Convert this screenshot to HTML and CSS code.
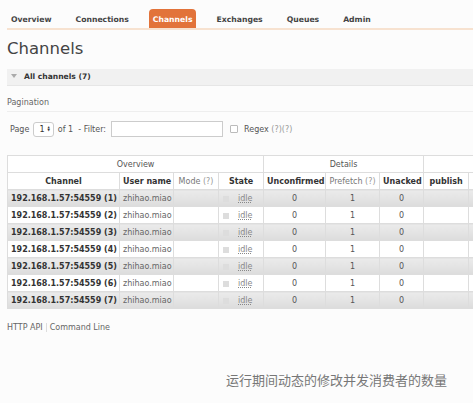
FILE: index.html
```html
<!DOCTYPE html>
<html lang="en">

<head>
  <meta charset="UTF-8">
  <title>Channels</title>
  <link rel="stylesheet" href="styles.css">
</head>

<body>

  <!-- Top navigation -->
  <ul class="tabs">
    <li><a href="#">Overview</a></li>
    <li><a href="#">Connections</a></li>
    <li><a href="#" class="selected">Channels</a></li>
    <li><a href="#">Exchanges</a></li>
    <li><a href="#">Queues</a></li>
    <li><a href="#">Admin</a></li>
  </ul>

  <h1>Channels</h1>

  <div class="section-bar"><span class="arrow"></span>All channels (7)</div>

  <div class="pagination-label">Pagination</div>

  <!-- Filter row -->
  <div class="filter-row">
    <span>Page</span>
    <span class="select">1<span class="spin">&#9650;<br>&#9660;</span></span>
    <span>of 1&nbsp; - Filter:</span>
    <span class="filter-input"></span>
    <span class="checkbox"></span>
    <span>Regex <span class="help">(?)(?)</span></span>
  </div>

  <div class="table-wrap">
    <table class="list">
      <colgroup>
        <col style="width:112px">
        <col style="width:54px">
        <col style="width:45px">
        <col style="width:45px">
        <col style="width:62px">
        <col style="width:54px">
        <col style="width:44px">
        <col style="width:45px">
        <col style="width:40px">
      </colgroup>
      <thead>
        <tr class="group">
          <th colspan="4">Overview</th>
          <th colspan="3">Details</th>
          <th colspan="2"></th>
        </tr>
        <tr>
          <th>Channel</th>
          <th>User name</th>
          <th class="light">Mode <span class="help">(?)</span></th>
          <th>State</th>
          <th>Unconfirmed</th>
          <th class="light">Prefetch <span class="help">(?)</span></th>
          <th>Unacked</th>
          <th>publish</th>
          <th></th>
        </tr>
      </thead>
      <tbody id="rows"></tbody>
    </table>
  </div>

  <div class="footer">
    <a href="#">HTTP API</a><a href="#">Command Line</a>
  </div>

  <div class="caption">运行期间动态的修改并发消费者的数量</div>

  <script>
    const rows = document.getElementById('rows');
    for (let i = 1; i <= 7; i++) {
      const tr = document.createElement('tr');
      tr.className = i % 2 ? 'alt1' : 'alt2';
      tr.innerHTML =
        '<td class="name">192.168.1.57:54559 (' + i + ')</td>' +
        '<td class="user">zhihao.miao</td>' +
        '<td></td>' +
        '<td class="state"><span class="dot"></span><abbr>idle</abbr></td>' +
        '<td class="num">0</td>' +
        '<td class="num">1</td>' +
        '<td class="num">0</td>' +
        '<td></td>' +
        '<td></td>';
      rows.appendChild(tr);
    }
  </script>

</body>

</html>
```

FILE: styles.css
```css
html,
body {
  overflow: hidden;
}

body {
  margin: 0;
  background: #fcfcfc;
  font-family: "DejaVu Sans", Verdana, sans-serif;
  font-size: 8px;
  color: #444;
}

/* Navigation tabs */
.tabs {
  display: flex;
  gap: 16px;
  list-style: none;
  margin: 9px 0 0 7px;
  padding: 0;
  border-bottom: 2px solid #f7e2d0;
}

.tabs a {
  display: block;
  padding: 0 4px;
  height: 19px;
  line-height: 21px;
  font-size: 7.7px;
  font-weight: bold;
  color: #444;
  text-decoration: none;
}

.tabs a.selected {
  background: #e2733a;
  color: #fff;
  border-radius: 4px 4px 0 0;
}

/* Page title */
h1 {
  margin: 9px 7px 10px;
  font-size: 16.5px;
  line-height: 20px;
  font-weight: normal;
  color: #444;
}

/* Section bar */
.section-bar {
  margin-left: 7px;
  height: 16px;
  line-height: 16px;
  background: #f1f1f1;
  border-bottom: 1px solid #e6e6e6;
  font-weight: bold;
  font-size: 7.6px;
  color: #333;
}

.arrow {
  display: inline-block;
  width: 0;
  height: 0;
  margin: 0 7px 1px 4px;
  border-left: 3px solid transparent;
  border-right: 3px solid transparent;
  border-top: 4px solid #aaa;
}

.pagination-label {
  margin: 11px 0 0 7px;
  padding-bottom: 3px;
  border-bottom: 1px solid #eee;
  color: #666;
  line-height: 11px;
}

/* Filter row */
.filter-row {
  display: flex;
  align-items: center;
  gap: 4px;
  margin: 9px 0 0 10px;
  height: 16px;
  color: #555;
}

.select {
  display: inline-flex;
  align-items: center;
  gap: 3px;
  height: 13px;
  padding: 0 3px 0 5px;
  border: 1px solid #ccc;
  border-radius: 3px;
  background: #fff;
  color: #333;
}

.spin {
  font-size: 3px;
  line-height: 3.5px;
}

.filter-input {
  width: 110px;
  height: 14px;
  margin-left: 1px;
  border: 1px solid #ccc;
  background: #fff;
}

.checkbox {
  width: 6px;
  height: 6px;
  margin-left: 3px;
  margin-right: 2px;
  border: 1px solid #bbb;
  border-radius: 1px;
  background: #fff;
}

.help {
  color: #999;
}

/* Table */
.table-wrap {
  margin: 18px 0 0 7px;
  overflow: hidden;
}

.list {
  table-layout: fixed;
  border-collapse: collapse;
  width: 501px;
}

.list th,
.list td {
  height: 16px;
  padding: 0 3px;
  border: 1px solid #ddd;
  white-space: nowrap;
  overflow: hidden;
}

.list th {
  background: #fff;
  font-weight: bold;
  color: #333;
  text-align: center;
}

.list tr.group th {
  font-weight: normal;
  color: #555;
}

.list th.light {
  font-weight: normal;
  color: #777;
}

.list tr.alt1 td {
  background: linear-gradient(#ebebeb, #dcdcdc);
}

.list tr.alt2 td {
  background: #fff;
}

.list td.name {
  font-weight: bold;
  color: #333;
}

.list td.user {
  color: #666;
}

.list td.num {
  text-align: center;
  color: #555;
}

.list td.state {
  color: #888;
  padding-left: 4px;
}

.dot {
  display: inline-block;
  width: 6px;
  height: 6px;
  margin-right: 9px;
  background: #ddd;
  vertical-align: -1px;
}

.list td.state abbr {
  text-decoration: underline dotted;
}

/* Footer links */
.footer {
  margin: 13px 0 0 7px;
  line-height: 12px;
}

.footer a {
  color: #666;
  text-decoration: none;
}

.footer a + a {
  margin-left: 3px;
  padding-left: 3px;
  border-left: 1px solid #ddd;
}

/* Caption */
.caption {
  margin-top: 36px;
  padding-left: 226px;
  font-family: "Noto Sans CJK SC", sans-serif;
  font-size: 13px;
  color: #777;
}
```
